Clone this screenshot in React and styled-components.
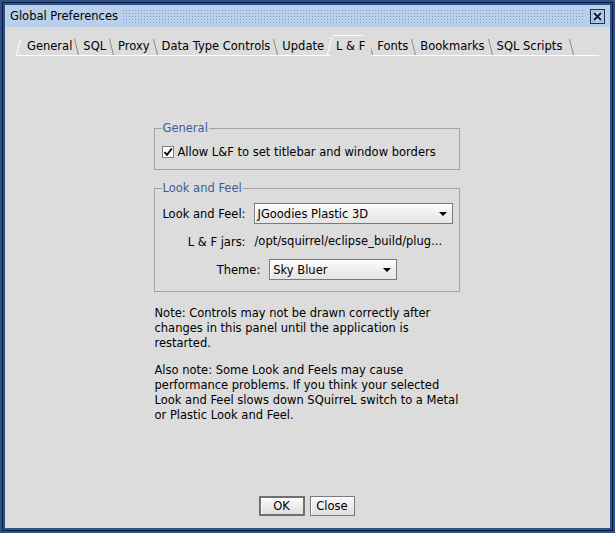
import React from 'react';
import styled, { createGlobalStyle } from 'styled-components';

const GlobalStyle = createGlobalStyle`
  html, body {
    margin: 0;
    padding: 0;
    background: #2c4f8f;
  }
  body {
    font-family: "DejaVu Sans", "Liberation Sans", sans-serif;
    font-size: 12px;
    color: #000;
  }
`;

const Frame = styled.div`
  width: 615px;
  height: 533px;
  box-sizing: border-box;
  padding: 5px;
  background: #2c4f8f;
  box-shadow: inset 0 0 0 2px #2c4f8f, inset 0 0 0 3px #0d1a33;
  display: flex;
  flex-direction: column;
`;

const TitleBar = styled.div`
  height: 22px;
  background: #b9d0ea;
  display: flex;
  align-items: center;
  padding: 0 5px;
  gap: 4px;
`;

const TitleText = styled.span`
  font-size: 11.5px;
  color: #000;
  white-space: nowrap;
`;

const Dots = styled.div`
  flex: 1;
  height: 14px;
  background-image: radial-gradient(circle, #7e9ecb 0.7px, transparent 0.9px);
  background-size: 3px 3px;
  margin-right: 2px;
`;

const CloseBox = styled.div`
  width: 15px;
  height: 15px;
  display: flex;
`;

const Body = styled.div`
  flex: 1;
  background: #dcdcdc;
  display: flex;
  flex-direction: column;
`;

const TabStrip = styled.div`
  margin: 8px 11px 0 11px;
  height: 20px;
  display: flex;
  align-items: flex-end;
  border-bottom: 1px solid #ffffff;
`;

const Tab = styled.div`
  position: relative;
  height: ${p => (p.$selected ? '21px' : '18px')};
  margin-bottom: ${p => (p.$selected ? '-1px' : '0')};
  padding: 0 ${p => (p.$first ? '5px' : '6px')} 0 ${p => (p.$first ? '11px' : '6px')};
  display: flex;
  align-items: center;
  font-size: 11.5px;
  white-space: nowrap;
  background: #dcdcdc;
  z-index: ${p => (p.$selected ? 2 : 1)};
  &::before {
    content: '';
    position: absolute;
    left: ${p => (p.$first ? '2px' : '-1px')};
    top: 2px;
    bottom: 0;
    border-left: 1px solid ${p => (p.$first || p.$selected ? '#ffffff' : '#8a8a8a')};
    transform: skewX(${p => (p.$first || p.$selected ? '-14deg' : '14deg')});
  }
  &::after {
    content: '';
    display: ${p => (p.$last ? 'block' : 'none')};
    position: absolute;
    right: -4px;
    top: 2px;
    bottom: 0;
    border-left: 1px solid #8a8a8a;
    transform: skewX(14deg);
  }
`;

const TabTop = styled.span`
  position: absolute;
  left: 3px;
  right: 8px;
  top: 0;
  border-top: 1px solid #ffffff;
  border-top-right-radius: 6px;
`;

const Content = styled.div`
  flex: 1;
  display: flex;
  flex-direction: column;
  align-items: center;
`;

const Column = styled.div`
  width: 306px;
  margin-top: 65px;
  margin-left: -2px;
  display: flex;
  flex-direction: column;
`;

const Group = styled.fieldset`
  margin: 0 0 ${p => p.$gap || 0}px 0;
  padding: ${p => p.$pad};
  border: 1px solid #a3a3a3;
  min-width: 0;
`;

const Legend = styled.legend`
  padding: 0 1px;
  margin-left: 0;
  line-height: 14px;
  color: #3e5c9a;
  font-size: 11.5px;
`;

const CheckRow = styled.label`
  display: flex;
  align-items: center;
  gap: 4px;
  height: 14px;
  font-size: 11.5px;
`;

const CheckBox = styled.span`
  width: 12px;
  height: 12px;
  box-sizing: border-box;
  background: #ffffff;
  border: 1px solid #7d7d7d;
  display: flex;
  align-items: center;
  justify-content: center;
`;

const FormGrid = styled.div`
  display: grid;
  grid-template-columns: 84px 199px;
  column-gap: 8px;
  row-gap: 7px;
  align-items: center;
`;

const Label = styled.span`
  text-align: right;
  font-size: 11.5px;
  white-space: nowrap;
`;

const Value = styled.span`
  font-size: 11.5px;
  white-space: nowrap;
  padding-left: 1px;
  line-height: 21px;
`;

const ThemeRow = styled.div`
  grid-column: 1 / -1;
  display: flex;
  justify-content: center;
  align-items: center;
  gap: 9px;
`;

const Combo = styled.div`
  width: ${p => p.$w}px;
  height: 21px;
  box-sizing: border-box;
  border: 1px solid #7a7a7a;
  box-shadow: inset 1px 1px 0 #ffffff;
  background: linear-gradient(#fbfbfb, #e4e4e4);
  display: flex;
  align-items: center;
  padding: 0 5px 0 3px;
  font-size: 11.5px;
`;

const ComboText = styled.span`
  flex: 1;
  white-space: nowrap;
`;

const Arrow = styled.span`
  width: 0;
  height: 0;
  border-left: 4px solid transparent;
  border-right: 4px solid transparent;
  border-top: 4px solid #000;
  margin-top: 1px;
`;

const Note = styled.p`
  margin: ${p => p.$top}px 0 0 1px;
  font-size: 11.5px;
  line-height: 15px;
  white-space: nowrap;
`;

const ButtonBar = styled.div`
  margin-top: auto;
  padding-bottom: 12px;
  display: flex;
  justify-content: center;
  gap: 5px;
  margin-left: -2px;
`;

const Button = styled.button`
  width: ${p => p.$w}px;
  height: 20px;
  box-sizing: border-box;
  padding: 0;
  font-family: inherit;
  font-size: 11.5px;
  color: #000;
  background: linear-gradient(#fafafa, #dedede);
  border: ${p => (p.$default ? '2px solid #707070' : '1px solid #7a7a7a')};
  box-shadow: inset 1px 1px 0 #ffffff;
  border-radius: 0;
`;

const tabs = ['General', 'SQL', 'Proxy', 'Data Type Controls', 'Update', 'L & F', 'Fonts', 'Bookmarks', 'SQL Scripts'];

export default function App() {
  return (
    <Frame>
      <GlobalStyle />
      <TitleBar>
        <TitleText>Global Preferences</TitleText>
        <Dots />
        <CloseBox>
          <svg width="15" height="15" viewBox="0 0 15 15">
            <rect x="0.5" y="0.5" width="14" height="14" fill="#dfe9f6" stroke="#1c2f55" />
            <rect x="2" y="2" width="11" height="11" fill="#c5d7ee" stroke="#7d97c0" strokeWidth="0.8" />
            <path d="M4 4 L11 11 M11 4 L4 11" stroke="#10203f" strokeWidth="2" />
          </svg>
        </CloseBox>
      </TitleBar>
      <Body>
        <TabStrip>
          {tabs.map((t, i) => (
            <Tab
              key={t}
              $first={i === 0}
              $last={i === tabs.length - 1}
              $selected={t === 'L & F'}
            >
              {t === 'L & F' && <TabTop />}
              {t}
            </Tab>
          ))}
        </TabStrip>
        <Content>
          <Column>
            <Group $pad="10px 6px 10px 7px" $gap={11}>
              <Legend>General</Legend>
              <CheckRow>
                <CheckBox>
                  <svg width="10" height="10" viewBox="0 0 10 10">
                    <path d="M1.5 5 L4 7.8 L8.8 1.5" fill="none" stroke="#000" strokeWidth="1.8" />
                  </svg>
                </CheckBox>
                Allow L&amp;F to set titlebar and window borders
              </CheckRow>
            </Group>
            <Group $pad="8px 6px 11px 7px">
              <Legend>Look and Feel</Legend>
              <FormGrid>
                <Label>Look and Feel:</Label>
                <Combo $w={199}>
                  <ComboText>JGoodies Plastic 3D</ComboText>
                  <Arrow />
                </Combo>
                <Label>L &amp; F jars:</Label>
                <Value>/opt/squirrel/eclipse_build/plug...</Value>
                <ThemeRow>
                  <Label>Theme:</Label>
                  <Combo $w={128}>
                    <ComboText>Sky Bluer</ComboText>
                    <Arrow />
                  </Combo>
                </ThemeRow>
              </FormGrid>
            </Group>
            <Note $top={14}>
              Note: Controls may not be drawn correctly after<br />
              changes in this panel until the application is<br />
              restarted.
            </Note>
            <Note $top={12}>
              Also note: Some Look and Feels may cause<br />
              performance problems. If you think your selected<br />
              Look and Feel slows down SQuirreL switch to a Metal<br />
              or Plastic Look and Feel.
            </Note>
          </Column>
        </Content>
        <ButtonBar>
          <Button $w={46} $default>OK</Button>
          <Button $w={45}>Close</Button>
        </ButtonBar>
      </Body>
    </Frame>
  );
}
